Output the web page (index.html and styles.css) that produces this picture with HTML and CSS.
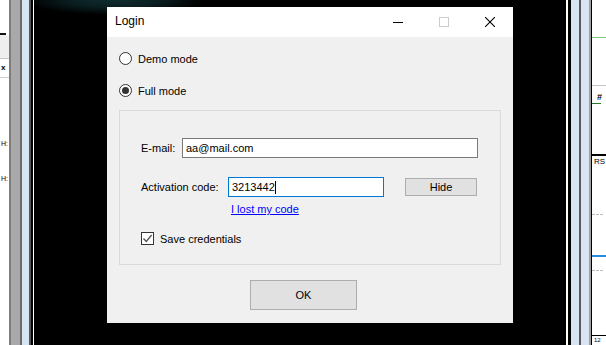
FILE: index.html
```html
<!DOCTYPE html>
<html lang="en">
<head>
  <meta charset="UTF-8" />
  <title>Login</title>
  <link rel="stylesheet" href="styles.css">
</head>
<body>
  <div class="screen">
    <div class="side-left">
      <div class="lp-head"></div>
      <div class="lp-tab"></div>
      <div class="lp-close">x</div>
      <div class="lp-row lp-row-first">H:</div>
      <div class="lp-row">H:</div>
    </div>
    <div class="frame-left"></div>

    <div class="desktop">
      <div class="dialog">
        <div class="titlebar">
          <span class="title">Login</span>
          <div class="caption-btns">
            <span class="cap">
              <svg width="10" height="10" viewBox="0 0 10 10"><path d="M0 5.5h10" stroke="#000" stroke-width="1"/></svg>
            </span>
            <span class="cap">
              <svg width="10" height="10" viewBox="0 0 10 10"><rect x="0.5" y="0.5" width="9" height="9" fill="none" stroke="#cccccc" stroke-width="1"/></svg>
            </span>
            <span class="cap">
              <svg width="10" height="10" viewBox="0 0 10 10"><path d="M0 0L10 10M10 0L0 10" stroke="#000" stroke-width="1.1"/></svg>
            </span>
          </div>
        </div>

        <div class="dlg-body">
          <div class="radio radio-demo"><span class="radio-dot"></span>Demo mode</div>
          <div class="radio radio-full radio-on"><span class="radio-dot"></span>Full mode</div>

          <div class="group">
            <div class="field field-email">
              <span class="field-label label-email">E-mail:</span>
              <div class="textbox textbox-email">aa@mail.com</div>
            </div>
            <div class="field field-code">
              <span class="field-label label-code">Activation code:</span>
              <div class="textbox textbox-code">3213442<span class="caret"></span></div>
              <div class="btn btn-hide">Hide</div>
            </div>
            <div class="lost-row"><span class="lost-link">I lost my code</span></div>
            <div class="check">
              <span class="check-box">
                <svg width="11" height="11" viewBox="0 0 11 11"><path d="M1.5 5.5L4.3 8.5L9.6 2" fill="none" stroke="#555" stroke-width="1.4"/></svg>
              </span>
              Save credentials
            </div>
          </div>

          <div class="btn btn-ok">OK</div>
        </div>
      </div>
    </div>

    <div class="frame-right"></div>
    <div class="side-right">
      <div class="rp-green"></div>
      <div class="rp-grey"></div>
      <div class="rp-hash">#</div>
      <div class="rp-dkgreen"></div>
      <div class="rp-black"></div>
      <div class="rp-text">RS</div>
      <div class="rp-dash rp-dash-first"></div>
      <div class="rp-blue"></div>
      <div class="rp-dash rp-dash-second"></div>
      <div class="rp-bottom"></div>
      <div class="rp-label">12</div>
    </div>
  </div>
</body>
</html>
```

FILE: styles.css
```css
* {
  margin: 0;
  padding: 0;
  box-sizing: border-box;
}
body {
  width: 606px;
  height: 345px;
  overflow: hidden;
  background: #000;
  font-family: 'Liberation Sans', Arial, sans-serif;
  font-size: 11px;
  color: #000;
}
.screen {
  display: flex;
  height: 345px;
}

/* app behind the dialog: left edge */
.side-left {
  width: 9px;
  background: #fff;
  overflow: hidden;
  font-size: 7px;
}
.lp-head {
  width: 6px;
  height: 35px;
  border-bottom: 2px solid #111;
}
.lp-tab {
  height: 24px;
  background: #efefef;
  border-bottom: 1px solid #c8c8c8;
}
.lp-close {
  height: 19px;
  border-bottom: 1px solid #cfcfcf;
  font-weight: bold;
  font-size: 8px;
  line-height: 17px;
  padding-left: 1px;
}
.lp-row {
  margin-top: 26px;
  line-height: 9px;
  padding-left: 1px;
}
.lp-row-first {
  margin-top: 61px;
}
.frame-left {
  width: 25px;
  background: linear-gradient(to right,
    #7d7d7d 0 2px, #a9a9a9 2px 11px, #6a6a6a 11px 13px,
    #d8e4f2 13px 20px, #555 20px 22px, #000 22px 24px, #fff 24px 25px);
}

/* desktop area with the dialog */
.desktop {
  width: 532px;
  padding: 7px 0 0 73px;
  background:
    radial-gradient(ellipse 90px 15px at 80px 0, #0f2d30 0%, #0a1e20 50%, rgba(0,0,0,0) 100%),
    #000;
}
.dialog {
  width: 406px;
  height: 316px;
  background: #f0f0f0;
  display: flex;
  flex-direction: column;
}
.titlebar {
  height: 30px;
  background: #fff;
  display: flex;
  align-items: center;
  justify-content: space-between;
}
.title {
  font-size: 12px;
  padding-left: 8px;
  margin-bottom: 2px;
}
.caption-btns {
  display: flex;
  height: 30px;
}
.cap {
  width: 46px;
  height: 30px;
  display: flex;
  align-items: center;
  justify-content: center;
}
.cap svg {
  display: block;
}

.dlg-body {
  flex: 1;
  padding-left: 12px;
}
.radio {
  display: flex;
  align-items: center;
  gap: 6px;
  height: 13px;
}
.radio-demo {
  margin-top: 15px;
}
.radio-full {
  margin-top: 19px;
}
.radio-dot {
  width: 13px;
  height: 13px;
  border: 1px solid #333;
  border-radius: 50%;
  background: #fff;
  display: flex;
  align-items: center;
  justify-content: center;
}
.radio-on .radio-dot::after {
  content: '';
  width: 7px;
  height: 7px;
  border-radius: 50%;
  background: #333;
}

.group {
  margin-top: 13px;
  width: 382px;
  height: 155px;
  border: 1px solid #dadada;
  padding-left: 21px;
}
.field {
  display: flex;
  align-items: center;
}
.field-email {
  margin-top: 27px;
}
.field-code {
  margin-top: 19px;
}
.label-email {
  width: 41px;
}
.label-code {
  width: 87px;
}
.textbox {
  height: 20px;
  background: #fff;
  border: 1px solid #7a7a7a;
  padding-left: 3px;
  display: flex;
  align-items: center;
}
.textbox-email {
  width: 296px;
}
.textbox-code {
  width: 156px;
  border-color: #0078d7;
}
.caret {
  width: 1px;
  height: 13px;
  background: #000;
}
.btn {
  background: #e1e1e1;
  border: 1px solid #adadad;
  display: flex;
  align-items: center;
  justify-content: center;
}
.btn-hide {
  width: 72px;
  height: 18px;
  margin-left: 21px;
}
.lost-row {
  margin-top: 6px;
  padding-left: 90px;
  height: 13px;
  line-height: 13px;
}
.lost-link {
  color: #0000ff;
  text-decoration: underline;
}
.check {
  margin-top: 16px;
  display: flex;
  align-items: center;
  gap: 6px;
  height: 13px;
}
.check-box {
  width: 13px;
  height: 13px;
  border: 1px solid #333;
  background: #fff;
  display: flex;
  align-items: center;
  justify-content: center;
}
.btn-ok {
  margin: 15px 0 0 131px;
  width: 107px;
  height: 30px;
}

/* app behind the dialog: right edge */
.frame-right {
  width: 26px;
  background: linear-gradient(to right,
    #fff 0 2px, #000 2px 5px, #d8e4f2 5px 13px, #5a5a5a 13px 15px,
    #d8e4f2 15px 23px, #a0a0a0 23px 25px, #000 25px 26px);
}
.side-right {
  width: 14px;
  background: #fff;
  overflow: hidden;
  font-size: 8px;
}
.rp-green {
  margin-top: 37px;
  height: 1px;
  background: #84c984;
}
.rp-grey {
  margin-top: 47px;
  height: 1px;
  background: #c4c4c4;
}
.rp-hash {
  margin-top: 7px;
  height: 9px;
  line-height: 9px;
  font-size: 9px;
  font-weight: bold;
  padding-left: 5px;
}
.rp-dkgreen {
  margin-top: 1px;
  width: 9px;
  height: 1px;
  background: #2a7a2a;
}
.rp-black {
  margin-top: 50px;
  height: 2px;
  background: #000;
}
.rp-text {
  margin-top: 1px;
  height: 9px;
  line-height: 9px;
  padding-left: 2px;
}
.rp-dash {
  width: 11px;
  border-top: 1px dashed #bdbdbd;
}
.rp-dash-first {
  margin-top: 48px;
}
.rp-blue {
  margin-top: 40px;
  height: 2px;
  background: #2a8ae0;
}
.rp-dash-second {
  margin-top: 13px;
}
.rp-bottom {
  margin-top: 64px;
  height: 1px;
  background: #000;
}
.rp-label {
  margin-top: 1px;
  font-size: 6px;
  line-height: 7px;
  padding-left: 2px;
}
```
